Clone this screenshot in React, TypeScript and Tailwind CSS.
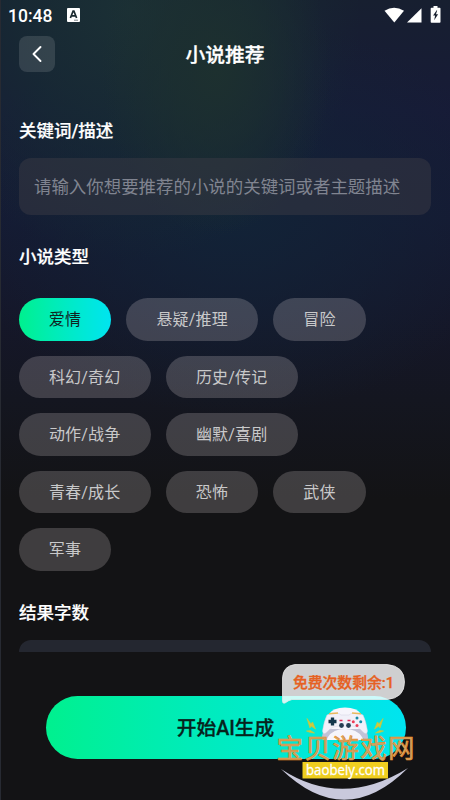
import React from "react";

const rows = [
  ["爱情", "悬疑/推理", "冒险"],
  ["科幻/奇幻", "历史/传记"],
  ["动作/战争", "幽默/喜剧"],
  ["青春/成长", "恐怖", "武侠"],
  ["军事"],
];

function Chip({ label, active }: { label: string; active?: boolean }) {
  return (
    <button
      className={
        "flex h-[42.5px] items-center justify-center rounded-full pt-[2px] text-[16px] tracking-[0.2px] " +
        (label.length > 2 ? "w-[132px] " : "w-[92.5px] ") +
        (active
          ? "bg-linear-to-r from-[#00f08e] to-[#00e4f0] text-[#10231f]"
          : "bg-[#fff7f7]/19 text-[#c9c9ca]")
      }
    >
      {label}
    </button>
  );
}

function StatusBar() {
  return (
    <div className="flex h-8 items-center justify-between pr-2 pl-[7px]">
      <div className="flex items-center gap-[15px]">
        <span className="font-[Roboto] text-[17.5px] leading-8 font-medium text-white">10:48</span>
        <svg className="-mt-0.5" width="13" height="14" viewBox="0 0 13 14">
          <rect width="13" height="14" rx="1" fill="#fff" />
          <path d="M3.4 10 6.1 3h.8l2.7 7M4.5 7.9h4" fill="none" stroke="#1b2b30" strokeWidth="1.7" />
          <path d="M7 12.2h4" stroke="#7b8588" strokeWidth="1" />
        </svg>
      </div>
      <svg className="-mt-0.5" width="58" height="18" viewBox="0 0 58 18" fill="#fff">
        <path d="M0.5 4.8Q10 -1.500 20 4.800L10.300 16.500Z" />
        <path d="M23 16.600 37.500 2.200V16.600Z" />
        <path d="M49.500 0h4v1.700h2.200q.8 0 .8.8v13.400q0 .8-.8.8h-8.200q-.8 0-.8-.8V2.500q0-.8.8-.8h2Z" />
        <path d="M52.700 4.200 49.100 9.600h2l-.9 4.600 3.900-6h-2.100l1.200-4Z" fill="#18202f" />
      </svg>
    </div>
  );
}

function Watermark() {
  return (
    <svg className="absolute top-[705px] left-[271px]" width="146" height="95" viewBox="0 0 146 95">
      <path d="M9 64Q70 104 136 63Q73 126 9 64Z" fill="#c9c9dc" />
      <path d="M57 9Q61 2.500 73 2.500T89 9L91 35H55Z" fill="#f6f5fc" />
      <path d="M54 24Q50 27 50 33Q51 38 56 32Q61 24 73 24T90 32Q95 38 96 33Q96 27 92 24Z" fill="#c2c2d6" />
      <path d="M55 10Q60 7 67 8.500L69 10H77L79 8.500Q86 7 91 10Q94 16 95.500 26Q95 31 90 26Q86 21 80 21H66Q60 21 56 26Q51 31 50.500 26Q52 16 55 10Z" fill="#f1f0f9" stroke="#d3d2e2" strokeWidth=".5" />
      <path d="M57 8.700 66 8M80 8l9 .7" stroke="#e8b85c" strokeWidth="1.500" fill="none" />
      <path d="M60.500 12.500v8M56.500 16.500h8" stroke="#12364b" strokeWidth="3.300" />
      <circle cx="69.500" cy="20.500" r="2.400" fill="#263d52" />
      <circle cx="76.500" cy="20.500" r="2.400" fill="#263d52" />
      <path d="M67.500 15.500h3M75.500 15.500h3" stroke="#e32955" strokeWidth="1.700" />
      <circle cx="85" cy="13" r="1.500" fill="#168ba5" />
      <circle cx="85" cy="20.500" r="1.500" fill="#ed3b56" />
      <circle cx="81.300" cy="16.800" r="1.500" fill="#ed3b56" />
      <circle cx="88.700" cy="16.800" r="1.500" fill="#168ba5" />
      <path d="m35 13.500 4 5.500 1.500-2 3 7-4.500-3-1 2Zm-.500 12.500 4-.500 4 2.500-4-.500ZM111 13.500l-4 5.500-1.500-2-3 7 4.500-3 1 2Zm.500 12.500-4-.500-4 2.500 4-.500Z" fill="#d2c83c" stroke="#c6c83c" strokeWidth=".7" />
      <text x="4.500" y="53.300" fontSize="26.500" textLength="138" fontFamily="Noto Sans CJK SC, sans-serif" fontWeight="400" fill="#c9a46c" stroke="#ee8d22" strokeWidth=".6">宝贝游戏网</text>
      <rect x="30.500" y="57" width="85.500" height="16.500" fill="#efce20" />
      <text x="34" y="69.800" fontSize="14.500" textLength="79" lengthAdjust="spacingAndGlyphs" fontFamily="Open Sans, sans-serif" fontWeight="500" fill="#fff" stroke="#fff" strokeWidth=".3">baobeiy.com</text>
    </svg>
  );
}

export default function App() {
  return (
    <main className="relative flex h-[800px] w-[450px] flex-col overflow-hidden border-l border-[#272a32] bg-[#131315] bg-[radial-gradient(ellipse_115px_165px_at_215px_70px,#1d302f_0%,#1d302f99_45%,transparent_100%),radial-gradient(ellipse_230px_250px_at_130px_10px,#1b3035_0%,#172b34bb_50%,transparent_100%),radial-gradient(ellipse_280px_200px_at_235px_215px,#122337_0%,transparent_100%),linear-gradient(180deg,#171f30_0px,#171b37_110px,#151a33_220px,#15172a_310px,#141620_400px,#131315_500px)] font-[Roboto,'Noto_Sans_CJK_SC',sans-serif]">
      <StatusBar />
      <header className="grid h-[44px] grid-cols-[36px_1fr_36px] items-center pr-[19px] pl-[18px]">
        <button className="flex h-9 w-9 items-center justify-center rounded-[8px] bg-white/12">
          <svg width="12" height="18" viewBox="0 0 12 18" fill="none" stroke="#fff" strokeWidth="1.900" strokeLinecap="round" strokeLinejoin="round">
            <path d="M9.500 2 2.500 9l7 7" />
          </svg>
        </button>
        <h1 className="pt-[3px] text-center text-[19.8px] font-medium text-white [-webkit-text-stroke:0.3px_#fff]">小说推荐</h1>
      </header>
      <section className="h-[576px] shrink-0 overflow-hidden pr-[19px] pl-[18px] pt-[42px]">
        <h2 className="h-[26px] text-[17.5px] leading-[26px] font-medium text-white [-webkit-text-stroke:0.2px_#fff]">关键词/描述</h2>
        <div className="mt-[14px] flex h-[57px] items-center rounded-[12px] bg-[#393a43]/50 pt-[2px] pl-[15px] text-[17.46px] whitespace-nowrap text-[#808490]">
          请输入你想要推荐的小说的关键词或者主题描述
        </div>
        <h2 className="mt-[29px] h-[26px] text-[17.5px] leading-[26px] font-medium text-white [-webkit-text-stroke:0.2px_#fff]">小说类型</h2>
        <div className="mt-7 flex flex-col gap-[15px]">
          {rows.map((row, i) => (
            <div key={i} className="-ml-[0.3px] flex gap-[15px]">
              {row.map((x) => (
                <Chip key={x} label={x} active={x === "爱情"} />
              ))}
            </div>
          ))}
        </div>
        <h2 className="mt-[29px] h-[26px] text-[17.5px] leading-[26px] font-medium text-white [-webkit-text-stroke:0.2px_#fff]">结果字数</h2>
        <div className="mt-[14px] h-14 rounded-[12px] bg-[#242730]" />
      </section>
      <footer className="flex flex-1 flex-col items-center pt-[44px]">
        <button className="h-[63px] w-[360px] rounded-full bg-linear-to-r from-[#00f08e] to-[#00e4f0] pt-[2px] text-[19.7px] font-medium text-[#06231c] [-webkit-text-stroke:0.3px_#06231c]">
          开始AI生成
        </button>
      </footer>
      <div className="absolute top-[664px] left-[281px] flex h-[39px] w-[123px] items-start justify-center">
        <svg className="absolute inset-0" width="123" height="40" viewBox="0 0 123 40">
          <path d="M13 .500H105Q122.500 2 122.500 18T105 35.500H10Q7 36 3 39Q.500 40 .500 37V14Q1 2 13 .500Z" fill="#fff" fillOpacity=".8" stroke="#e7e7e7" strokeWidth=".8" />
        </svg>
        <span className="relative text-[14.8px] leading-[38px] font-medium text-[#e66021] [-webkit-text-stroke:0.35px_#e66021]">免费次数剩余:1</span>
      </div>
      <Watermark />
    </main>
  );
}
